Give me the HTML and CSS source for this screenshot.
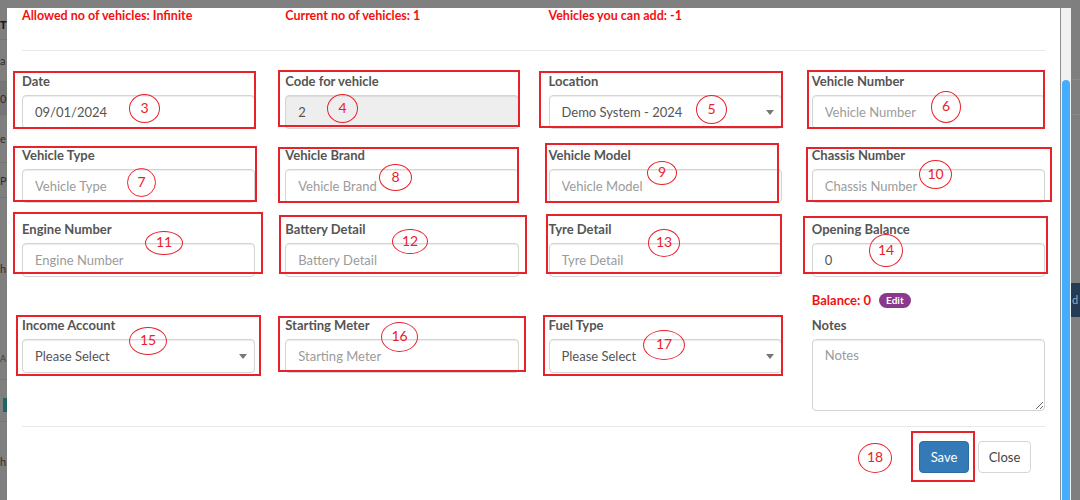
FILE: index.html
```html
<!DOCTYPE html>
<html lang="en">
<head>
<meta charset="utf-8">
<title>Add Vehicle</title>
<link rel="stylesheet" href="styles.css">
</head>
<body>
<div class="screen">
  <div class="bd-left">
    <div class="bl-row bl-r0"><span class="bl-glyph bl-big">T</span></div>
    <div class="bl-row bl-r1"><span class="bl-glyph">a</span></div>
    <div class="bl-row bl-r2"><span class="bl-glyph">0</span></div>
    <div class="bl-row bl-r3"><span class="bl-glyph">e</span></div>
    <div class="bl-row bl-r4"><span class="bl-glyph">P</span></div>
    <div class="bl-row bl-r5"><span class="bl-glyph">h</span></div>
    <div class="bl-row bl-r6"><span class="bl-glyph bl-small">A</span></div>
    <div class="bl-row bl-r7"><span class="bl-teal"></span></div>
    <div class="bl-row bl-r8"><span class="bl-glyph">h</span></div>
  </div>

  <div class="modal">
    <div class="modal-body">
      <div class="grid4 info-row">
        <p class="info">Allowed no of vehicles: Infinite</p>
        <p class="info">Current no of vehicles: 1</p>
        <p class="info">Vehicles you can add: -1</p>
      </div>
      <hr class="divider">
      <div class="grid4 form-grid">
        <div class="cell">
          <div class="form-group"><label>Date</label><input class="form-control" value="09/01/2024"></div>
        </div>
        <div class="cell">
          <div class="form-group"><label>Code for vehicle</label><input class="form-control is-disabled" value="2" disabled></div>
        </div>
        <div class="cell">
          <div class="form-group"><label>Location</label><div class="form-control select"><span>Demo System - 2024</span><i class="caret"></i></div></div>
        </div>
        <div class="cell">
          <div class="form-group"><label>Vehicle Number</label><input class="form-control" placeholder="Vehicle Number"></div>
        </div>

        <div class="cell">
          <div class="form-group"><label>Vehicle Type</label><input class="form-control" placeholder="Vehicle Type"></div>
        </div>
        <div class="cell">
          <div class="form-group"><label>Vehicle Brand</label><input class="form-control" placeholder="Vehicle Brand"></div>
        </div>
        <div class="cell">
          <div class="form-group"><label>Vehicle Model</label><input class="form-control" placeholder="Vehicle Model"></div>
        </div>
        <div class="cell">
          <div class="form-group"><label>Chassis Number</label><input class="form-control" placeholder="Chassis Number"></div>
        </div>

        <div class="cell">
          <div class="form-group"><label>Engine Number</label><input class="form-control" placeholder="Engine Number"></div>
        </div>
        <div class="cell">
          <div class="form-group"><label>Battery Detail</label><input class="form-control" placeholder="Battery Detail"></div>
        </div>
        <div class="cell">
          <div class="form-group"><label>Tyre Detail</label><input class="form-control" placeholder="Tyre Detail"></div>
        </div>
        <div class="cell">
          <div class="form-group"><label>Opening Balance</label><input class="form-control" value="0"></div>
          <p class="balance">Balance: 0 <span class="badge">Edit</span></p>
        </div>

        <div class="cell">
          <div class="form-group"><label>Income Account</label><div class="form-control select"><span>Please Select</span><i class="caret"></i></div></div>
        </div>
        <div class="cell">
          <div class="form-group"><label>Starting Meter</label><input class="form-control" placeholder="Starting Meter"></div>
        </div>
        <div class="cell">
          <div class="form-group"><label>Fuel Type</label><div class="form-control select"><span>Please Select</span><i class="caret"></i></div></div>
        </div>
        <div class="cell">
          <div class="form-group"><label>Notes</label><textarea class="form-control notes" placeholder="Notes"></textarea></div>
        </div>
      </div>
    </div>
    <div class="modal-footer">
      <button class="btn btn-primary">Save</button>
      <button class="btn btn-default">Close</button>
    </div>
  </div>

  <div class="scrollbar"><div class="thumb"></div></div>

  <div class="bd-right">
    <div class="br-row br-r0"></div>
    <div class="br-row br-r1"></div>
    <div class="br-row br-r2"></div>
    <div class="br-blue">d</div>
  </div>

  <div class="annotations">
    <div class="box bx3"></div>
    <div class="box bx4"></div>
    <div class="box bx5"></div>
    <div class="box bx6"></div>
    <div class="box bx7"></div>
    <div class="box bx8"></div>
    <div class="box bx9"></div>
    <div class="box bx10"></div>
    <div class="box bx11"></div>
    <div class="box bx12"></div>
    <div class="box bx13"></div>
    <div class="box bx14"></div>
    <div class="box bx15"></div>
    <div class="box bx16"></div>
    <div class="box bx17"></div>
    <div class="box bx18"></div>

    <div class="num n3">3</div>
    <div class="num n4">4</div>
    <div class="num n5">5</div>
    <div class="num n6">6</div>
    <div class="num n7">7</div>
    <div class="num n8">8</div>
    <div class="num n9">9</div>
    <div class="num n10">10</div>
    <div class="num n11">11</div>
    <div class="num n12">12</div>
    <div class="num n13">13</div>
    <div class="num n14">14</div>
    <div class="num n15">15</div>
    <div class="num n16">16</div>
    <div class="num n17">17</div>
    <div class="num n18">18</div>
  </div>
</div>
</body>
</html>
```

FILE: styles.css
```css
* { box-sizing: border-box; }
html, body { margin: 0; padding: 0; }
body {
  width: 1080px;
  height: 500px;
  overflow: hidden;
  background: #808080;
  font-family: Lato, "Open Sans", "Liberation Sans", sans-serif;
  font-size: 13px;
  color: #555;
}

.screen {
  position: relative;
  display: flex;
  width: 1080px;
  height: 500px;
}

/* ---------- backdrop slivers ---------- */
.bd-left {
  width: 7px;
  flex: none;
  display: flex;
  flex-direction: column;
  overflow: hidden;
  background: #7f7f7f;
}
.bl-row {
  flex: none;
  overflow: hidden;
  border-bottom: 1px solid #737373;
  display: flex;
  align-items: center;
  font-size: 11px;
  color: #2e2e2e;
  white-space: nowrap;
}
.bl-glyph { margin-left: 0; }
.bl-big { font-weight: 900; font-size: 11px; color: #1a1a1a; }
.bl-small { font-size: 9px; color: #4a4030; }
.bl-r0 { height: 40px; padding-top: 10px; }
.bl-r1 { height: 42px; }
.bl-r2 { height: 33px; background: #767676; }
.bl-r3 { height: 48px; }
.bl-r4 { height: 35px; }
.bl-r5 { height: 140px; border-bottom: none; }
.bl-r6 { height: 42px; }
.bl-r7 { height: 42px; align-items: flex-start; padding-top: 18px; }
.bl-teal { display: block; width: 4px; height: 14px; margin-left: 3px; background: #1f6468; }
.bl-r8 { height: 78px; border-bottom: none; }

.bd-right {
  width: 9px;
  flex: none;
  display: flex;
  flex-direction: column;
  background: #7f7f7f;
  overflow: hidden;
}
.br-row { flex: none; border-bottom: 1px solid #8a8a8a; }
.br-r0 { height: 80px; }
.br-r1 { height: 35px; }
.br-r2 { height: 168px; border-bottom: none; }
.br-blue {
  height: 34px;
  background: #233b55;
  color: #9aa7b5;
  font-size: 11px;
  line-height: 34px;
  padding-left: 1px;
}

.scrollbar {
  width: 11px;
  flex: none;
  margin-top: 8px;
  background: #f1f1f1;
  border-left: 1px solid #8c8c8c;
  display: flex;
  flex-direction: column;
  padding-top: 72px;
}
.thumb {
  flex: 1;
  width: 8px;
  margin-left: 1px;
  background: #45adfd;
  border-radius: 4px 4px 0 0;
}

/* ---------- modal ---------- */
.modal {
  flex: 1;
  margin-top: 8px;
  background: #fff;
  display: flex;
  flex-direction: column;
}
.modal-body {
  padding: 0 15px 0 15px;
}
.grid4 {
  display: grid;
  grid-template-columns: repeat(4, 1fr);
  column-gap: 30px;
}
.info-row { padding-top: 1px; }
.info {
  margin: 0;
  line-height: 14px;
  font-weight: 700;
  font-size: 12.5px;
  color: #f40f0f;
  white-space: nowrap;
}
.divider {
  margin: 27px 0 20px;
  border: 0;
  border-top: 1px solid #e8e8e8;
  height: 0;
}

.form-grid { margin-bottom: -1px; }
.cell { display: flex; flex-direction: column; }
.form-group { margin-bottom: 16px; }
.form-group label {
  display: block;
  margin-bottom: 5px;
  line-height: 19px;
  font-weight: 700;
  font-size: 13px;
  color: #555;
  white-space: nowrap;
  padding-top: 1px;
  height: 19px;
}
.form-control {
  display: block;
  width: 100%;
  height: 34px;
  padding: 6px 12px;
  font-family: inherit;
  font-size: 13px;
  color: #555;
  background: #fff;
  border: 1px solid #d4d4d4;
  border-radius: 4px;
  box-shadow: inset 0 1px 1px rgba(0,0,0,.075);
  outline: none;
}
.form-control::placeholder { color: #9b9b9b; }
.is-disabled { background: #eeeeee; color: #555; -webkit-text-fill-color: #555; }
.select {
  display: flex;
  align-items: center;
  justify-content: space-between;
  padding-right: 7px;
}
.caret {
  width: 0;
  height: 0;
  border-left: 4px solid transparent;
  border-right: 4px solid transparent;
  border-top: 5px solid #777;
}
.notes {
  height: 72px;
  resize: vertical;
  padding-top: 7px;
}
.balance {
  margin: -3px 0 5px;
  height: 20px;
  line-height: 20px;
  font-weight: 700;
  font-size: 13px;
  color: #f40f0f;
  display: flex;
  align-items: center;
  gap: 8px;
}
.badge {
  display: inline-block;
  height: 15px;
  line-height: 15px;
  padding: 0 7px;
  border-radius: 8px;
  background: #8a3a8c;
  color: #fff;
  font-size: 10px;
  font-weight: 700;
}

.modal-footer {
  margin: 0 15px;
  border-top: 1px solid #e8e8e8;
  padding: 14px 14px 15px;
  display: flex;
  justify-content: flex-end;
  gap: 9px;
}
.btn {
  height: 32px;
  padding: 0 12px;
  font-family: inherit;
  font-size: 13px;
  border-radius: 4px;
  border: 1px solid transparent;
}
.btn-primary { background: #337ab7; border-color: #2e6da4; color: #fff; width: 50px; padding: 0; }
.btn-default { background: #fff; border-color: #d6d6d6; color: #444; width: 53px; padding: 0; }

/* ---------- annotation overlay ---------- */
.annotations {
  position: absolute;
  left: 0;
  top: 0;
  width: 1080px;
  height: 500px;
  pointer-events: none;
}
.box {
  position: absolute;
  border: 2px solid #e8222b;
}
.bx3  { left: 13px;  top: 71px;  width: 243px; height: 58px; }
.bx4  { left: 278px; top: 70px;  width: 242px; height: 57px; }
.bx5  { left: 539px; top: 71px;  width: 244px; height: 57px; }
.bx6  { left: 807px; top: 70px;  width: 238px; height: 59px; }
.bx7  { left: 13px;  top: 146px; width: 244px; height: 56px; }
.bx8  { left: 278px; top: 147px; width: 241px; height: 56px; }
.bx9  { left: 545px; top: 143px; width: 234px; height: 60px; }
.bx10 { left: 806px; top: 147px; width: 246px; height: 55px; }
.bx11 { left: 13px;  top: 212px; width: 250px; height: 62px; }
.bx12 { left: 279px; top: 215px; width: 248px; height: 59px; }
.bx13 { left: 546px; top: 214px; width: 236px; height: 60px; }
.bx14 { left: 803px; top: 216px; width: 245px; height: 58px; }
.bx15 { left: 16px;  top: 315px; width: 245px; height: 61px; }
.bx16 { left: 278px; top: 316px; width: 248px; height: 56px; }
.bx17 { left: 543px; top: 315px; width: 240px; height: 61px; }
.bx18 { left: 911px; top: 431px; width: 64px;  height: 51px; }

.num {
  position: absolute;
  border: 1.5px solid #e8222b;
  border-radius: 50%;
  display: flex;
  align-items: center;
  justify-content: center;
  color: #e8222b;
  font-size: 14px;
  line-height: 1;
  padding-bottom: 2px;
}
.n3  { left: 129px; top: 94px;  width: 31px; height: 29px; }
.n4  { left: 327px; top: 94px;  width: 31px; height: 29px; }
.n5  { left: 696px; top: 95px;  width: 31px; height: 29px; }
.n6  { left: 931px; top: 91px;  width: 30px; height: 32px; }
.n7  { left: 127px; top: 168px; width: 29px; height: 29px; }
.n8  { left: 379px; top: 164px; width: 33px; height: 27px; }
.n9  { left: 647px; top: 161px; width: 30px; height: 24px; }
.n10 { left: 919px; top: 160px; width: 33px; height: 29px; }
.n11 { left: 145px; top: 231px; width: 38px; height: 24px; }
.n12 { left: 392px; top: 229px; width: 36px; height: 25px; }
.n13 { left: 648px; top: 229px; width: 32px; height: 28px; }
.n14 { left: 869px; top: 234px; width: 34px; height: 33px; }
.n15 { left: 129px; top: 327px; width: 38px; height: 28px; }
.n16 { left: 381px; top: 322px; width: 37px; height: 30px; }
.n17 { left: 643px; top: 330px; width: 42px; height: 30px; }
.n18 { left: 858px; top: 443px; width: 34px; height: 30px; }
```
